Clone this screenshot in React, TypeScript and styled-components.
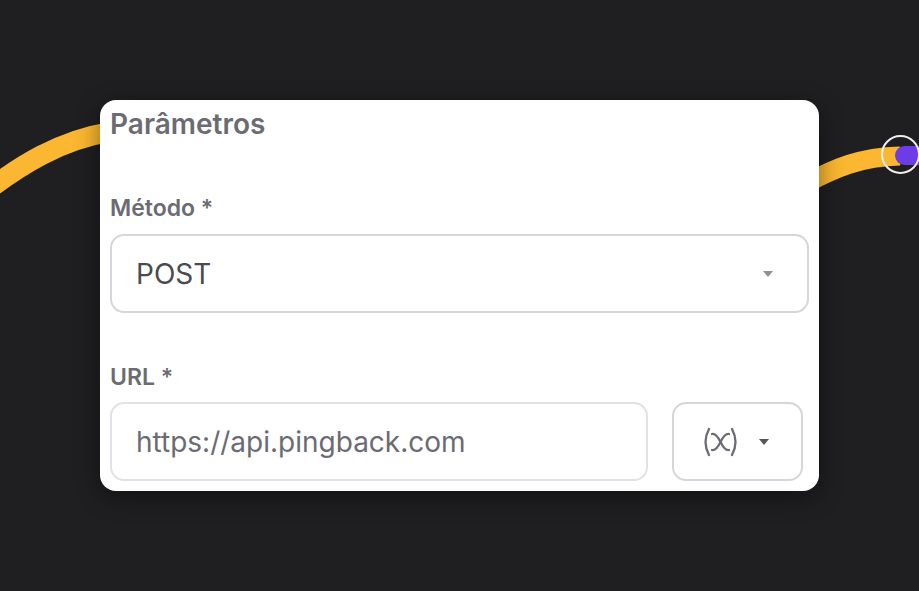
import React from 'react';
import styled, { createGlobalStyle } from 'styled-components';

const GlobalStyle = createGlobalStyle`
  html, body {
    margin: 0;
    padding: 0;
    background: #1f1f22;
    font-family: Inter, "Noto Sans", sans-serif;
  }
  * { box-sizing: border-box; }
`;

const Canvas = styled.div`
  position: relative;
  width: 919px;
  height: 591px;
  overflow: hidden;
  background: #1f1f22;
  padding: 100px 0 0 100px;
`;

const Edges = styled.svg`
  position: absolute;
  left: 0;
  top: 0;
  width: 919px;
  height: 591px;
`;

const Handle = styled.div`
  position: absolute;
  left: 881px;
  top: 135px;
  width: 39px;
  height: 39px;
  border-radius: 50%;
  border: 2.5px solid #f2efe9;
`;

const HandlePill = styled.div`
  position: absolute;
  left: 895px;
  top: 146px;
  width: 44px;
  height: 19px;
  border-radius: 10px;
  background: #6c3ce6;
`;

const Card = styled.div`
  position: relative;
  width: 719px;
  height: 391px;
  background: #ffffff;
  border-radius: 16px;
  padding: 8px 10px 10px;
  box-shadow: 0 6px 24px rgba(0, 0, 0, 0.45);
  display: flex;
  flex-direction: column;
`;

const Title = styled.h2`
  margin: 0;
  font-size: 28px;
  line-height: 32px;
  font-weight: 600;
  color: #6b6b73;
`;

const Label = styled.label<{ $top: number; $gap: number }>`
  display: block;
  margin-top: ${p => p.$top}px;
  margin-bottom: ${p => p.$gap}px;
  font-size: 23px;
  line-height: 24px;
  font-weight: 600;
  color: #6b6b73;
`;

const Select = styled.div`
  height: 79px;
  border: 2px solid #d6d6da;
  border-radius: 14px;
  padding: 0 34px 0 24px;
  display: flex;
  align-items: center;
  justify-content: space-between;
  font-size: 28px;
  color: #4a4a50;
`;

const Caret = styled.span<{ $color: string }>`
  width: 0;
  height: 0;
  border-left: 5px solid transparent;
  border-right: 5px solid transparent;
  border-top: 6px solid ${p => p.$color};
`;

const UrlRow = styled.div`
  display: flex;
  gap: 24px;
  padding-right: 6px;
`;

const Input = styled.div`
  flex: 1;
  height: 79px;
  border: 2px solid #e2e2e5;
  border-radius: 14px;
  padding: 0 24px;
  display: flex;
  align-items: center;
  font-size: 28px;
  color: #6b6b73;
`;

const VarButton = styled.button`
  width: 131px;
  height: 79px;
  border: 2px solid #d6d6da;
  border-radius: 14px;
  background: #fff;
  display: flex;
  align-items: center;
  justify-content: center;
  gap: 20px;
  padding: 0 4px 0 0;
`;

const VariableIcon = () => (
  <svg width="37" height="30" viewBox="0 0 37 30" fill="none" stroke="#6b6b73" strokeWidth="2.3" strokeLinecap="round">
    <path d="M7 2 Q0 15 7 28" />
    <path d="M30 2 Q37 15 30 28" />
    <path d="M10 7 Q14 6 18.5 15 Q23 24 27 23" />
    <path d="M27 7 Q23 6 18.5 15 Q14 24 10 23" />
  </svg>
);

export default function App() {
  return (
    <>
      <GlobalStyle />
      <Canvas>
        <Edges viewBox="0 0 919 591">
          <path d="M -20 196 C 20 165, 60 140, 110 132" stroke="#fbb731" strokeWidth="20" fill="none" />
          <path d="M 805 184 C 835 168, 860 157, 900 156" stroke="#fbb731" strokeWidth="19" fill="none" />
        </Edges>
        <HandlePill />
        <Handle />
        <Card>
          <Title>Parâmetros</Title>
          <Label $top={56} $gap={14}>Método *</Label>
          <Select>
            <span>POST</span>
            <Caret $color="#8e8e93" />
          </Select>
          <Label $top={52} $gap={13}>URL *</Label>
          <UrlRow>
            <Input>https://api.pingback.com</Input>
            <VarButton>
              <VariableIcon />
              <Caret $color="#55555c" />
            </VarButton>
          </UrlRow>
        </Card>
      </Canvas>
    </>
  );
}
